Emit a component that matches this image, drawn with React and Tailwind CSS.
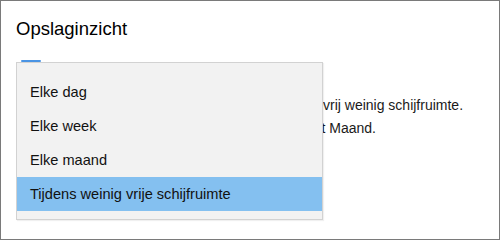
export default function App() {
  const items = ["Elke dag", "Elke week", "Elke maand", "Tijdens weinig vrije schijfruimte"];
  const selected = 3;
  return (
    <div className="relative w-[500px] h-[240px] bg-white border border-[#7a7a7a] text-black font-['Liberation_Sans',Arial,sans-serif] overflow-hidden">
      <div className="pl-[15px] pt-[16px]">
        <h1 className="text-[18.5px] leading-[24px] font-normal">Opslaginzicht</h1>
        <div className="ml-[5px] mt-[19px] w-[20px] h-[2px] rounded-full bg-[#4a94e4]" />
        <div className="mt-[32px] text-[14px] leading-[23px] text-[#1a1a1a]">
          <div className="flex whitespace-nowrap">
            <span className="w-[307px] shrink-0" />
            <span>vrij weinig schijfruimte.</span>
          </div>
          <div className="flex whitespace-nowrap">
            <span className="w-[305.5px] shrink-0" />
            <span>t Maand.</span>
          </div>
        </div>
      </div>
      <div className="absolute left-[15px] top-[61px] w-[307px] h-[158px] bg-[#f2f2f2] border border-[#d2d2d2] pt-[12px] shadow-[1px_1px_1px_rgba(0,0,0,0.06)]">
        {items.map((it, i) => (
          <div
            key={it}
            className={
              "h-[34px] leading-[34px] pl-[13px] text-[14.6px] text-[#111] whitespace-nowrap " +
              (i === selected ? "bg-[#84c0f0]" : "")
            }
          >
            {it}
          </div>
        ))}
      </div>
    </div>
  );
}
